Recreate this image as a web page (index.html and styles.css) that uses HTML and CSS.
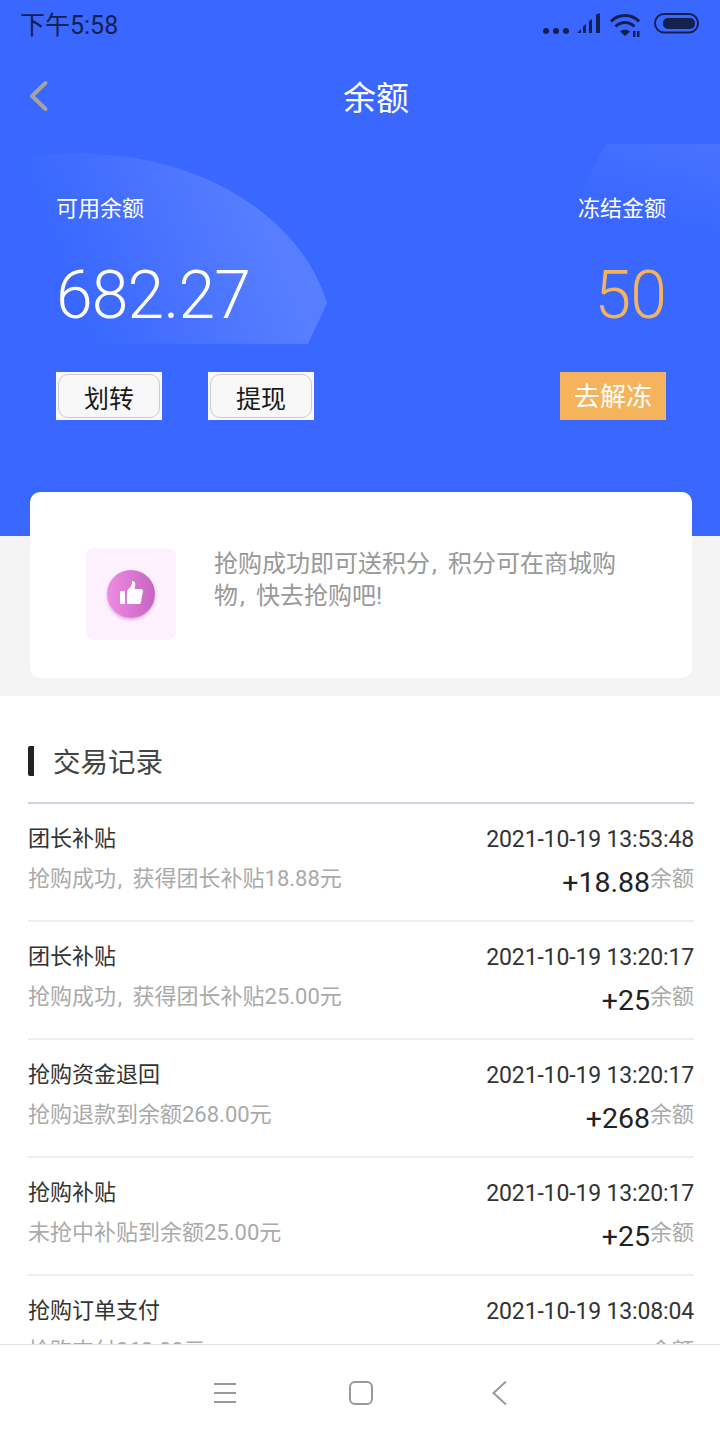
FILE: index.html
```html
<!DOCTYPE html>
<html lang="zh-CN">

<head>
    <meta charset="UTF-8">
    <meta name="viewport" content="width=device-width, initial-scale=1.0">
    <title>余额</title>
    <link rel="stylesheet" href="styles.css">
</head>

<body>
    <div class="page">
        <div class="hero">
            <!-- 背景装饰 -->
            <svg class="hero-deco" width="720" height="360" viewBox="0 0 720 360">
                <defs>
                    <linearGradient id="arcFill" x1="0.1" y1="0.3" x2="0.75" y2="0.15">
                        <stop offset="0" stop-color="#fff" stop-opacity="0"></stop>
                        <stop offset="1" stop-color="#fff" stop-opacity="0.15"></stop>
                    </linearGradient>
                    <linearGradient id="cornerFill" x1="0.7" y1="0" x2="0.3" y2="0.8">
                        <stop offset="0" stop-color="#fff" stop-opacity="0.07"></stop>
                        <stop offset="1" stop-color="#fff" stop-opacity="0"></stop>
                    </linearGradient>
                </defs>
                <path d="M0 160C40 153 80 152 110 155C210 163 302 220 327 303L308 344H50C30 330 10 300 0 270Z" fill="url(#arcFill)"></path>
                <path d="M606 144H720V230H560Z" fill="url(#cornerFill)"></path>
            </svg>

            <div class="status-bar">
                <span class="status-time">下午5:58</span>
                <svg class="status-icons" width="160" height="28" viewBox="0 0 160 28">
                    <g fill="#14204d">
                        <circle cx="6" cy="18" r="3"></circle>
                        <circle cx="16" cy="18" r="3"></circle>
                        <circle cx="26" cy="18" r="3"></circle>
                        <path d="M37 20l4-4v4zM43 13.500l3-2.500v9h-3zM49 8l3-2v14h-3zM56 1.500l4-1.500v20h-4z"></path>
                        <path d="M85 23l-5-4.500c2.800-2.300 7.200-2.300 10 0z"></path>
                        <path d="M93 18h2.500v6h-2.500zM97 18h2.500v6h-2.500z"></path>
                        <rect x="123" y="5" width="32" height="11" rx="5"></rect>
                    </g>
                    <g fill="none" stroke="#14204d" stroke-width="3">
                        <path d="M71 8.500C78.500 0.500 91.500 0.500 99 8.500"></path>
                        <path d="M75.500 13.500C81 8 89 8 94.500 13.500"></path>
                        <rect x="115" y="1" width="43" height="18.500" rx="9" stroke-width="2"></rect>
                    </g>
                </svg>
            </div>

            <div class="title-bar">
                <svg class="back-icon" width="20" height="32" viewBox="0 0 20 32">
                    <path d="M16.500 3L3 16L16.500 29" fill="none" stroke="#a3a3a3" stroke-width="4" stroke-linecap="round" stroke-linejoin="round"></path>
                </svg>
                <h1 class="page-title">余额</h1>
            </div>

            <div class="balance">
                <div class="balance-col">
                    <p class="balance-label">可用余额</p>
                    <p class="balance-num">682.27</p>
                    <div class="balance-btns">
                        <div class="btn-wrap"><button class="btn-plain">划转</button></div>
                        <div class="btn-wrap"><button class="btn-plain">提现</button></div>
                    </div>
                </div>
                <div class="balance-col balance-col-right">
                    <p class="balance-label">冻结金额</p>
                    <p class="balance-num balance-num-frozen">50</p>
                    <div class="btn-unfreeze">去解冻</div>
                </div>
            </div>
        </div>

        <div class="notice-wrap">
            <div class="notice">
                <div class="notice-icon">
                    <div class="notice-circle">
                        <svg width="24" height="25" viewBox="0 0 24 25">
                            <path d="M1 11h5v13H1zM8 11l4-5c.800-1.500 1-3 1-5 1.800-.500 3.300.800 3.300 3.200 0 1.800-.500 3.300-1.100 4.800h6.500c1.500 0 2.500 1 2.200 2.500l-2 11c-.300 1-1 1.500-2 1.500H8z" fill="#fff"></path>
                        </svg>
                    </div>
                </div>
                <p class="notice-text">抢购成功即可送积分<span class="comma">,</span>积分可在商城购<br>物<span class="comma">,</span>快去抢购吧!</p>
            </div>
        </div>

        <div class="records">
            <div class="records-head">
                <h2 class="records-title">交易记录</h2>
            </div>

            <div class="record">
                <div class="record-line">
                    <span class="record-name">团长补贴</span>
                    <span class="record-time">2021-10-19 13:53:48</span>
                </div>
                <div class="record-line">
                    <span class="record-desc">抢购成功<span class="comma">,</span>获得团长补贴18.88元</span>
                    <span class="record-amount"><b>+18.88</b><i>余额</i></span>
                </div>
            </div>
            <div class="record">
                <div class="record-line">
                    <span class="record-name">团长补贴</span>
                    <span class="record-time">2021-10-19 13:20:17</span>
                </div>
                <div class="record-line">
                    <span class="record-desc">抢购成功<span class="comma">,</span>获得团长补贴25.00元</span>
                    <span class="record-amount"><b>+25</b><i>余额</i></span>
                </div>
            </div>
            <div class="record">
                <div class="record-line">
                    <span class="record-name">抢购资金退回</span>
                    <span class="record-time">2021-10-19 13:20:17</span>
                </div>
                <div class="record-line">
                    <span class="record-desc">抢购退款到余额268.00元</span>
                    <span class="record-amount"><b>+268</b><i>余额</i></span>
                </div>
            </div>
            <div class="record">
                <div class="record-line">
                    <span class="record-name">抢购补贴</span>
                    <span class="record-time">2021-10-19 13:20:17</span>
                </div>
                <div class="record-line">
                    <span class="record-desc">未抢中补贴到余额25.00元</span>
                    <span class="record-amount"><b>+25</b><i>余额</i></span>
                </div>
            </div>
            <div class="record">
                <div class="record-line">
                    <span class="record-name">抢购订单支付</span>
                    <span class="record-time">2021-10-19 13:08:04</span>
                </div>
                <div class="record-line">
                    <span class="record-desc">抢购支付268.00元</span>
                    <span class="record-amount"><b>-268</b><i>余额</i></span>
                </div>
            </div>
        </div>

        <!-- 底部系统导航 -->
        <div class="sys-nav">
            <svg width="24" height="24" viewBox="0 0 24 24">
                <path d="M1 3H23M1 12H23M1 21H23" fill="none" stroke="#999" stroke-width="2"></path>
            </svg>
            <svg width="24" height="24" viewBox="0 0 24 24">
                <rect x="1" y="1" width="22" height="22" rx="5" fill="none" stroke="#999" stroke-width="2"></rect>
            </svg>
            <svg width="24" height="24" viewBox="0 0 24 24">
                <path d="M21 0.500L8.500 12L21 23.500" fill="none" stroke="#999" stroke-width="2"></path>
            </svg>
        </div>
    </div>
</body>

</html>
```

FILE: styles.css
```css
* {
    margin: 0px;
    padding: 0px;
    box-sizing: border-box;
}

body {
    width: 720px;
    height: 1440px;
    overflow: hidden;
    background-color: #fff;
    font-family: Roboto, "Noto Sans CJK SC", sans-serif;
}

.page {
    position: relative;
    width: 720px;
    height: 1440px;
    overflow: hidden;
}

/* 顶部蓝色区域 */
.hero {
    position: relative;
    height: 536px;
    background-color: #3967ff;
}

.hero-deco {
    position: absolute;
    left: 0;
    top: 0;
}

.status-bar {
    position: relative;
    display: flex;
    justify-content: space-between;
    align-items: center;
    height: 50px;
    padding: 0 20px 0 20px;
}

.status-time {
    margin-top: -4px;
    font-size: 25px;
    color: #14204d;
}

.status-icons {
    margin-top: 4px;
}

.title-bar {
    position: relative;
    height: 94px;
    padding-top: 18px;
}

.back-icon {
    position: absolute;
    left: 29px;
    top: 30px;
}

.page-title {
    padding-left: 32px;
    text-align: center;
    font-size: 33px;
    line-height: 62px;
    font-weight: 400;
    color: #fff;
}

.balance {
    position: relative;
    display: flex;
    justify-content: space-between;
    padding: 0 54px 0 56px;
}

.balance-col {
    display: flex;
    flex-direction: column;
    align-items: flex-start;
}

.balance-col-right {
    align-items: flex-end;
}

.balance-label {
    margin-top: 49px;
    font-size: 22px;
    line-height: 32px;
    color: #fff;
}

.balance-num {
    margin-top: 37px;
    height: 68px;
    font-size: 66px;
    line-height: 68px;
    font-weight: 300;
    letter-spacing: -0.8px;
    color: #fff;
}

.balance-num-frozen {
    color: #f5b45c;
}

.balance-btns {
    display: flex;
    gap: 46px;
    margin-top: 42px;
}

.btn-wrap {
    width: 106px;
    height: 48px;
    padding: 2px;
    background-color: #f8f8f8;
}

.btn-plain {
    display: block;
    width: 102px;
    height: 44px;
    padding-top: 1px;
    background-color: #f8f8f8;
    border: 1px solid #ccc;
    border-radius: 10px;
    font-family: inherit;
    font-size: 25px;
    color: #1a1a1a;
}

.btn-unfreeze {
    margin-top: 42px;
    width: 106px;
    height: 48px;
    padding-top: 1px;
    background-color: #f5b45c;
    text-align: center;
    font-size: 26px;
    line-height: 48px;
    color: #fff;
}

/* 提示卡片 */
.notice-wrap {
    position: relative;
    display: flex;
    align-items: flex-start;
    height: 160px;
    background-color: #f4f4f4;
    padding: 0 28px 0 30px;
}

.notice {
    display: flex;
    align-items: flex-start;
    gap: 38px;
    width: 100%;
    height: 186px;
    margin-top: -44px;
    padding: 56px 56px 0;
    background-color: #fff;
    border-radius: 10px;
}

.notice-icon {
    flex: none;
    display: flex;
    align-items: center;
    justify-content: center;
    width: 90px;
    height: 92px;
    background-color: #fdf0ff;
    border-radius: 8px;
}

.notice-circle {
    display: flex;
    align-items: center;
    justify-content: center;
    width: 48px;
    height: 48px;
    padding-bottom: 3px;
    border-radius: 50%;
    background: linear-gradient(90deg, #ee8ce2, #c763c2);
    box-shadow: 0 2px 3px rgba(200, 100, 190, 0.45);
}

.notice-text {
    white-space: nowrap;
    font-size: 24px;
    line-height: 32px;
    color: #999;
}

/* 半角逗号占 3/4 字宽 */
.comma {
    display: inline-block;
    width: 0.75em;
    padding-left: 0.08em;
}

/* 交易记录 */
.records {
    padding: 0 26px 0 28px;
    background-color: #fff;
}

.records-head {
    height: 108px;
    padding-top: 50px;
    border-bottom: 2px solid #d0d3e4;
}

.records-title {
    height: 30px;
    padding-left: 19px;
    border-left: 6px solid #222;
    border-radius: 2px;
    font-size: 27.500px;
    line-height: 34px;
    font-weight: 400;
    color: #444;
}

.record {
    height: 118px;
    padding-top: 19px;
    border-bottom: 2px solid #eee;
}

.record-line {
    display: flex;
    justify-content: space-between;
    align-items: flex-start;
    height: 40px;
}

.record-name {
    font-size: 22px;
    line-height: 32px;
    color: #333;
}

.record-time {
    font-size: 23px;
    line-height: 33px;
    letter-spacing: -0.15px;
    color: #333;
}

.record-desc {
    font-size: 22px;
    line-height: 32px;
    color: #aaa;
}

.record-amount {
    display: flex;
    align-items: flex-start;
}

.record-amount b {
    font-size: 28.500px;
    line-height: 40px;
    font-weight: 400;
    color: #222;
}

.record-amount i {
    font-size: 22px;
    line-height: 32px;
    font-style: normal;
    color: #aaa;
}

.sys-nav {
    position: absolute;
    left: 0;
    bottom: 0;
    display: flex;
    justify-content: center;
    align-items: flex-start;
    gap: 112px;
    width: 720px;
    height: 96px;
    padding: 36px 0 0 2px;
    background-color: #fff;
    border-top: 1px solid #e4e4e4;
}
```
